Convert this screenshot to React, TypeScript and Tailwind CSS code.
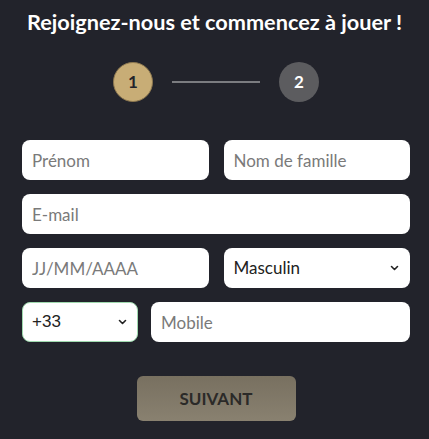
import React from "react";

const Chevron: React.FC = () => (
  <svg
    className="pointer-events-none absolute right-[11px] top-1/2 -translate-y-1/2"
    width="9"
    height="6"
    viewBox="0 0 9 6"
    fill="none"
    stroke="#222"
    strokeWidth="1.6"
    strokeLinecap="round"
    strokeLinejoin="round"
  >
    <path d="M1.5 1.5 4.5 4.5 7.5 1.5" />
  </svg>
);

const inputCls =
  "h-10 w-full rounded-lg bg-white px-[10px] text-[17px] text-[#222] placeholder:text-[#7a7a7a] outline-none font-['Lato',sans-serif]";

const App: React.FC = () => {
  return (
    <div className="min-h-[439px] w-[429px] bg-[#22232b] font-['Lato','Noto_Sans',sans-serif]">
      <h1 className="pt-[9px] text-center text-[21.7px] font-bold leading-[26px] text-white">
        Rejoignez-nous et commencez à jouer !
      </h1>

      <div className="mt-[27px] flex items-center justify-center pl-[3px]">
        <div className="flex h-10 w-10 items-center justify-center rounded-full border border-[#8d7850] bg-[#c8ad76] text-[17px] font-bold text-[#22232b]">
          1
        </div>
        <div className="mx-[19px] h-[2px] w-[88px] bg-[#7b7c80]" />
        <div className="flex h-10 w-10 items-center justify-center rounded-full bg-[#5c5c5f] text-[17px] font-bold text-white">
          2
        </div>
      </div>

      <form className="mt-[38px] flex flex-col gap-[14px] pl-[22px] pr-[19px]">
        <div className="grid grid-cols-2 gap-[15px]">
          <input className={inputCls} placeholder="Prénom" />
          <input className={inputCls} placeholder="Nom de famille" />
        </div>
        <input className={inputCls} placeholder="E-mail" />
        <div className="grid grid-cols-2 gap-[15px]">
          <input className={inputCls} placeholder="JJ/MM/AAAA" />
          <div className="relative">
            <select className={inputCls + " appearance-none"} defaultValue="m">
              <option value="m">Masculin</option>
              <option value="f">Féminin</option>
            </select>
            <Chevron />
          </div>
        </div>
        <div className="flex gap-[13px]">
          <div className="relative w-[116px] shrink-0">
            <select
              className="h-10 w-full appearance-none rounded-lg border border-[#9fd9ae] bg-white px-[9px] font-['Liberation_Sans',Arial,sans-serif] text-[17px] text-[#222] outline-none"
              defaultValue="33"
            >
              <option value="33">+33</option>
              <option value="32">+32</option>
            </select>
            <Chevron />
          </div>
          <input className={inputCls} placeholder="Mobile" />
        </div>

        <div className="mt-5 flex justify-center">
          <button
            type="button"
            className="h-[45px] w-[159px] rounded-md bg-gradient-to-b from-[#787060] to-[#898170] text-[17px] font-bold text-[#2b2a28]"
          >
            SUIVANT
          </button>
        </div>
      </form>
    </div>
  );
};

export default App;
